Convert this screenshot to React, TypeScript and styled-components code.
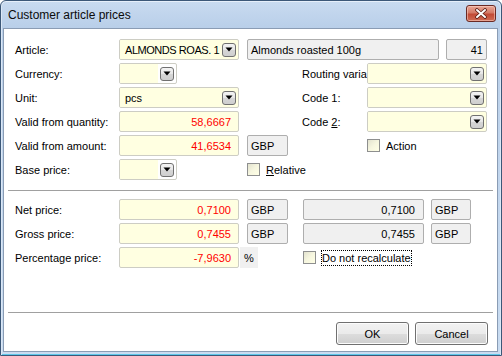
import styled, { createGlobalStyle } from "styled-components";

const GlobalStyle = createGlobalStyle`
  html, body {
    margin: 0;
    padding: 0;
    background: #ffffff;
  }
  * {
    box-sizing: border-box;
  }
`;

const Window = styled.div`
  width: 502px;
  height: 356px;
  display: flex;
  flex-direction: column;
  border: 1px solid #3c5878;
  border-radius: 6px 6px 0 0;
  background: linear-gradient(to bottom, #c9dbf0 0, #b9cfe9 26px, #c3d7ee 60%, #c9dcf1 100%);
  box-shadow: inset 0 1px 0 #e6effa, inset 1px 0 0 #dce8f6, inset -1px 0 0 #dce8f6, inset 0 -1px 0 #5ec8ea;
  font-family: "Liberation Sans", Arial, sans-serif;
  font-size: 11px;
  color: #000;
  overflow: hidden;
`;

const TitleBar = styled.div`
  height: 27px;
  flex: none;
  display: flex;
  align-items: center;
  justify-content: space-between;
  padding: 0 5px 0 7px;
`;

const Title = styled.span`
  font-size: 12px;
  color: #0b0b0b;
`;

const CloseButton = styled.div`
  width: 30px;
  height: 17px;
  margin-top: -2px;
  display: flex;
  align-items: center;
  justify-content: center;
  border: 1px solid #6a2a24;
  border-radius: 3px;
  background: linear-gradient(to bottom, #e9a796 0, #d47a66 45%, #c24a35 55%, #cf6d55 100%);
  box-shadow: inset 0 0 0 1px rgba(255, 220, 210, 0.5);
`;

const Client = styled.div`
  flex: 1;
  margin: 0 3px 3px 2px;
  border: 1px solid #8a9cb4;
  background: #ffffff;
  display: flex;
  flex-direction: column;
`;

const TopGrid = styled.div`
  display: grid;
  grid-template-columns: 104px 120px 8px 55px 65px 120px;
  grid-auto-rows: 21px;
  row-gap: 3px;
  margin: 10px 0 0 11px;
`;

const BottomGrid = styled.div`
  display: grid;
  grid-template-columns: 104px 120px 8px 41px 15px 121px 7px 40px;
  grid-auto-rows: 21px;
  row-gap: 3px;
  margin: 8px 0 0 11px;
`;

const Cell = styled.div<{ $col: string }>`
  grid-column: ${(p) => p.$col};
  display: flex;
  align-items: center;
  min-width: 0;
`;

const Label = styled.div<{ $col?: string }>`
  grid-column: ${(p) => p.$col || "1"};
  display: flex;
  align-items: center;
  white-space: nowrap;
`;

const Field = styled.div<{ $readonly?: boolean; $right?: boolean; $red?: boolean }>`
  flex: 1;
  height: 100%;
  display: flex;
  align-items: center;
  justify-content: ${(p) => (p.$right ? "flex-end" : "flex-start")};
  padding: ${(p) => (p.$readonly ? "0 7px 0 3px" : "0 7px 0 5px")};
  background: ${(p) => (p.$readonly ? "#f0f0f0" : "#ffffe1")};
  border: 1px solid ${(p) => (p.$readonly ? "#aeaeae" : "#cdcdc4")};
  border-radius: 2px;
  color: ${(p) => (p.$red ? "#ff0000" : "#000")};
  white-space: nowrap;
  overflow: hidden;
`;

const Combo = styled.div<{ $narrow?: boolean }>`
  width: ${(p) => (p.$narrow ? "58px" : "120px")};
  height: 100%;
  display: flex;
  align-items: center;
  border: 1px solid #cdcdc4;
  border-radius: 2px;
  background: ${(p) => (p.$narrow ? "#ffffff" : "#ffffe1")};
  overflow: hidden;
`;

const ComboText = styled.div<{ $narrow?: boolean; $tight?: boolean }>`
  flex: ${(p) => (p.$narrow ? "none" : "1")};
  width: ${(p) => (p.$narrow ? "38px" : "auto")};
  height: 100%;
  display: flex;
  align-items: center;
  padding-left: 5px;
  letter-spacing: ${(p) => (p.$tight ? "-0.45px" : "normal")};
  background: #ffffe1;
  white-space: nowrap;
`;

const DropButton = styled.div`
  width: 14px;
  height: 14px;
  flex: none;
  margin: 0 2px 0 auto;
  display: flex;
  align-items: center;
  justify-content: center;
  border: 1px solid #707070;
  border-radius: 3px;
  background: linear-gradient(to bottom, #f4f4f4 0, #e6e6e6 50%, #d6d6d6 51%, #cfcfcf 100%);
`;

const Tag = styled.div`
  width: 100%;
  height: 100%;
  display: flex;
  align-items: center;
  padding-left: 3px;
  background: #f0f0f0;
  border: 1px solid #aeaeae;
  border-radius: 2px;
`;

const Percent = styled.div`
  width: 18px;
  height: 100%;
  margin-left: 1px;
  display: flex;
  align-items: center;
  padding-left: 4px;
  background: #f0f0f0;
`;

const CheckRow = styled.label`
  display: flex;
  align-items: center;
  gap: 6px;
`;

const Box = styled.span`
  width: 13px;
  height: 13px;
  flex: none;
  border: 1px solid #8e8f8f;
  background: linear-gradient(135deg, #e2e2cf 0, #f6f6df 50%, #ffffe6 100%);
`;

const CheckText = styled.span<{ $focus?: boolean }>`
  padding: 1px 0;
  outline: ${(p) => (p.$focus ? "1px dotted #000" : "none")};
  outline-offset: 0;
`;

const Separator = styled.div<{ $top: number }>`
  height: 1px;
  margin: ${(p) => p.$top}px 4px 0 4px;
  background: #a0a0a0;
`;

const ButtonRow = styled.div`
  display: flex;
  justify-content: flex-end;
  gap: 6px;
  margin: 9px 9px 0 0;
`;

const Button = styled.div`
  width: 73px;
  height: 23px;
  display: flex;
  align-items: center;
  justify-content: center;
  border: 1px solid #707070;
  border-radius: 3px;
  background: linear-gradient(to bottom, #f2f2f2 0, #ebebeb 50%, #dddddd 51%, #cfcfcf 100%);
  box-shadow: inset 0 0 0 1px #fcfcfc;
`;

const Arrow = () => (
  <svg width="8" height="5" viewBox="0 0 8 5">
    <path d="M0.5 0.5 H7.5 L4 4.5 Z" fill="#000" />
  </svg>
);

const CloseGlyph = () => (
  <svg width="14" height="11" viewBox="0 0 14 11">
    <path d="M3 2 L11 9 M11 2 L3 9" stroke="#5a1d14" strokeWidth="3.6" strokeLinecap="round" />
    <path d="M3 2 L11 9 M11 2 L3 9" stroke="#ffffff" strokeWidth="2" strokeLinecap="round" />
  </svg>
);

const ComboBox = ({ text, narrow, tight }: { text?: string; narrow?: boolean; tight?: boolean }) => (
  <Combo $narrow={narrow}>
    <ComboText $narrow={narrow} $tight={tight}>{text}</ComboText>
    <DropButton>
      <Arrow />
    </DropButton>
  </Combo>
);

const Check = ({ children, focus }: { children: React.ReactNode; focus?: boolean }) => (
  <CheckRow>
    <Box />
    <CheckText $focus={focus}>{children}</CheckText>
  </CheckRow>
);

export default function App() {
  return (
    <>
      <GlobalStyle />
      <Window>
        <TitleBar>
          <Title>Customer article prices</Title>
          <CloseButton>
            <CloseGlyph />
          </CloseButton>
        </TitleBar>
        <Client>
          <TopGrid>
            <Label>Article:</Label>
            <Cell $col="2">
              <ComboBox text="ALMONDS ROAS. 1" tight />
            </Cell>
            <Cell $col="4 / 7" style={{ gap: 7 }}>
              <Field $readonly>Almonds roasted 100g</Field>
              <Field $readonly $right style={{ flex: "none", width: 41, paddingRight: 3 }}>
                41
              </Field>
            </Cell>

            <Label>Currency:</Label>
            <Cell $col="2">
              <ComboBox narrow />
            </Cell>
            <Label $col="5">Routing varia</Label>
            <Cell $col="6">
              <ComboBox />
            </Cell>

            <Label>Unit:</Label>
            <Cell $col="2">
              <ComboBox text="pcs" />
            </Cell>
            <Label $col="5">Code 1:</Label>
            <Cell $col="6">
              <ComboBox />
            </Cell>

            <Label>Valid from quantity:</Label>
            <Cell $col="2">
              <Field $right $red>58,6667</Field>
            </Cell>
            <Label $col="5">
              Code&nbsp;<u>2</u>:
            </Label>
            <Cell $col="6">
              <ComboBox />
            </Cell>

            <Label>Valid from amount:</Label>
            <Cell $col="2">
              <Field $right $red>41,6534</Field>
            </Cell>
            <Cell $col="4" style={{ width: 41 }}>
              <Tag>GBP</Tag>
            </Cell>
            <Cell $col="6">
              <Check>Action</Check>
            </Cell>

            <Label>Base price:</Label>
            <Cell $col="2">
              <ComboBox narrow />
            </Cell>
            <Cell $col="4 / 6">
              <Check>
                <u>R</u>elative
              </Check>
            </Cell>
          </TopGrid>

          <Separator $top={10} />

          <BottomGrid>
            <Label>Net price:</Label>
            <Cell $col="2">
              <Field $right $red>0,7100</Field>
            </Cell>
            <Cell $col="4">
              <Tag>GBP</Tag>
            </Cell>
            <Cell $col="6">
              <Field $readonly $right style={{ paddingRight: 8 }}>0,7100</Field>
            </Cell>
            <Cell $col="8">
              <Tag>GBP</Tag>
            </Cell>

            <Label>Gross price:</Label>
            <Cell $col="2">
              <Field $right $red>0,7455</Field>
            </Cell>
            <Cell $col="4">
              <Tag>GBP</Tag>
            </Cell>
            <Cell $col="6">
              <Field $readonly $right style={{ paddingRight: 8 }}>0,7455</Field>
            </Cell>
            <Cell $col="8">
              <Tag>GBP</Tag>
            </Cell>

            <Label>Percentage price:</Label>
            <Cell $col="2">
              <Field $right $red>-7,9630</Field>
            </Cell>
            <Cell $col="3 / 5">
              <Percent>%</Percent>
            </Cell>
            <Cell $col="6 / 9">
              <Check focus>Do not recalculate</Check>
            </Cell>
          </BottomGrid>

          <Separator $top={44} />

          <ButtonRow>
            <Button>OK</Button>
            <Button>Cancel</Button>
          </ButtonRow>
        </Client>
      </Window>
    </>
  );
}
